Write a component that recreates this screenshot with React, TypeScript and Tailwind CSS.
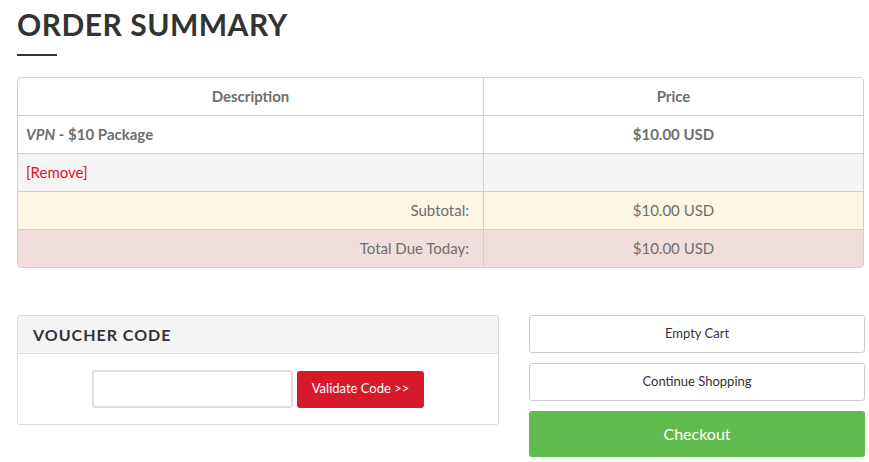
import React from 'react';

const font = { fontFamily: 'Lato, "Open Sans", Arial, sans-serif' };

export default function App() {
  return (
    <div className="bg-white w-[869px] h-[462px] overflow-hidden" style={font}>
      <div className="pl-[17px] pt-[6px]">
        <h1 className="text-[30px] leading-[36px] font-bold text-[#333] tracking-[0.5px]" style={{ fontFamily: 'Lato, "Noto Sans", sans-serif' }}>
          ORDER SUMMARY
        </h1>
        <div className="w-[40px] h-[2px] bg-[#333] mt-[12px]" />

        <div className="mt-[21px] w-[847px] border border-[#d0d0d0] rounded-[4px] overflow-hidden text-[15px] text-[#6e6e6e]">
          <div className="flex h-[38px] border-b border-[#d0d0d0] font-bold">
            <div className="w-[466px] border-r border-[#d0d0d0] flex items-center justify-center">Description</div>
            <div className="flex-1 flex items-center justify-center">Price</div>
          </div>
          <div className="flex h-[38px] border-b border-[#d0d0d0] font-bold">
            <div className="w-[466px] border-r border-[#d0d0d0] flex items-center px-[8px]">
              <span className="italic">VPN</span>&nbsp;- $10 Package
            </div>
            <div className="flex-1 flex items-center justify-center">$10.00 USD</div>
          </div>
          <div className="flex h-[38px] border-b border-[#d0d0d0] bg-[#f4f4f4]">
            <div className="w-[466px] border-r border-[#d0d0d0] flex items-center px-[8px] text-[#e0111f]">[Remove]</div>
            <div className="flex-1" />
          </div>
          <div className="flex h-[38px] border-b border-[#d0d0d0] bg-[#fcf7e3]">
            <div className="w-[466px] border-r border-[#d0d0d0] flex items-center justify-end px-[14px]">Subtotal:</div>
            <div className="flex-1 flex items-center justify-center">$10.00 USD</div>
          </div>
          <div className="flex h-[37px] bg-[#f2dddd]">
            <div className="w-[466px] border-r border-[#d0d0d0] flex items-center justify-end px-[14px]">Total Due Today:</div>
            <div className="flex-1 flex items-center justify-center">$10.00 USD</div>
          </div>
        </div>

        <div className="flex mt-[47px] gap-[30px]">
          <div className="w-[482px] h-[110px] border border-[#dcdcdc] rounded-[3px] overflow-hidden">
            <div className="h-[38px] bg-[#f4f4f4] border-b border-[#dcdcdc] flex items-center px-[15px] text-[16px] font-bold tracking-[1px] text-[#333]">
              VOUCHER CODE
            </div>
            <div className="flex justify-center items-center gap-[4px] pt-[16px]">
              <input className="w-[201px] h-[38px] border-2 border-[#dedede] rounded-[3px] bg-white outline-none" />
              <button className="w-[127px] h-[37px] bg-[#d71a29] text-white text-[13px] rounded-[3px]">
                Validate Code &gt;&gt;
              </button>
            </div>
          </div>
          <div className="w-[336px] flex flex-col gap-[10px]">
            <button className="h-[38px] border border-[#cccccc] rounded-[3px] bg-white text-[13px] text-[#333]">Empty Cart</button>
            <button className="h-[38px] border border-[#cccccc] rounded-[3px] bg-white text-[13px] text-[#333]">Continue Shopping</button>
            <button className="h-[46px] rounded-[3px] bg-[#62bb4e] text-[16px] text-white">Checkout</button>
          </div>
        </div>
      </div>
    </div>
  );
}
